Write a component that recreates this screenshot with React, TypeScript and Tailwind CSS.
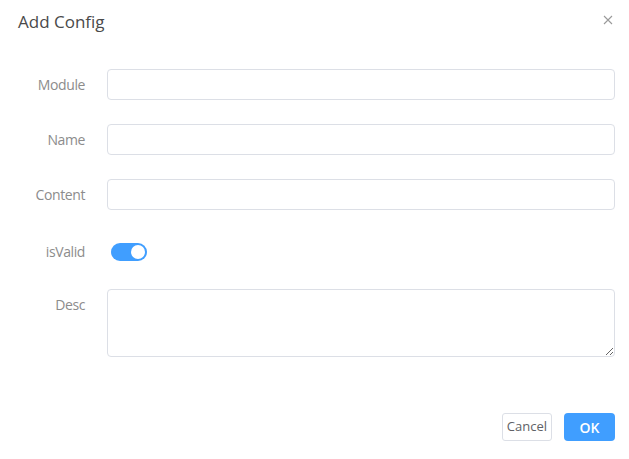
const rows = ["Module", "Name", "Content"];

const Label = ({ text }: { text: string }) => (
  <label className="w-[107px] shrink-0 pr-[22px] text-right text-[14px] tracking-[-0.4px] leading-[31px] text-[#8c8c8c]">
    {text}
  </label>
);

export default function App() {
  return (
    <div
      className="w-[629px] h-[459px] bg-white flex flex-col"
      style={{ fontFamily: '"Open Sans", "Noto Sans", sans-serif' }}
    >
      <div className="flex flex-row items-start justify-between pl-[18px] pr-[16px] pt-[9px]">
        <h2 className="text-[17px] leading-[26px] text-[#4a4a4a]">Add Config</h2>
        <button className="mt-[6px] text-[#909399]">
          <svg width="10" height="10" viewBox="0 0 10 10" stroke="#9a9a9a" strokeWidth="1.1">
            <path d="M1 1 L9 9 M9 1 L1 9" />
          </svg>
        </button>
      </div>

      <div className="flex flex-col pr-[14px] mt-[34px]">
        {rows.map((r) => (
          <div key={r} className="flex flex-row items-start mb-[24px]">
            <Label text={r} />
            <input className="flex-1 h-[31px] rounded-[4px] border border-[#dcdfe6] px-[12px] outline-none" />
          </div>
        ))}

        <div className="flex flex-row items-center h-[31px] mt-[2px] mb-[22px]">
          <Label text="isValid" />
          <div className="ml-[4px] w-[36px] h-[18px] rounded-full bg-[#409eff] flex flex-row items-center justify-end pr-[2px]">
            <div className="w-[14px] h-[14px] rounded-full bg-white" />
          </div>
        </div>

        <div className="flex flex-row items-start">
          <Label text="Desc" />
          <textarea className="flex-1 h-[68px] rounded-[4px] border border-[#dcdfe6] px-[12px] py-[5px] outline-none" />
        </div>
      </div>

      <div className="flex flex-row justify-end gap-[12px] pr-[14px] mt-[56px]">
        <button className="h-[28px] px-[4px] rounded-[3px] border border-[#dcdfe6] bg-white text-[13px] text-[#606266]">
          Cancel
        </button>
        <button className="h-[28px] w-[51px] rounded-[4px] bg-[#409eff] text-[14px] font-semibold text-white">
          OK
        </button>
      </div>
    </div>
  );
}
